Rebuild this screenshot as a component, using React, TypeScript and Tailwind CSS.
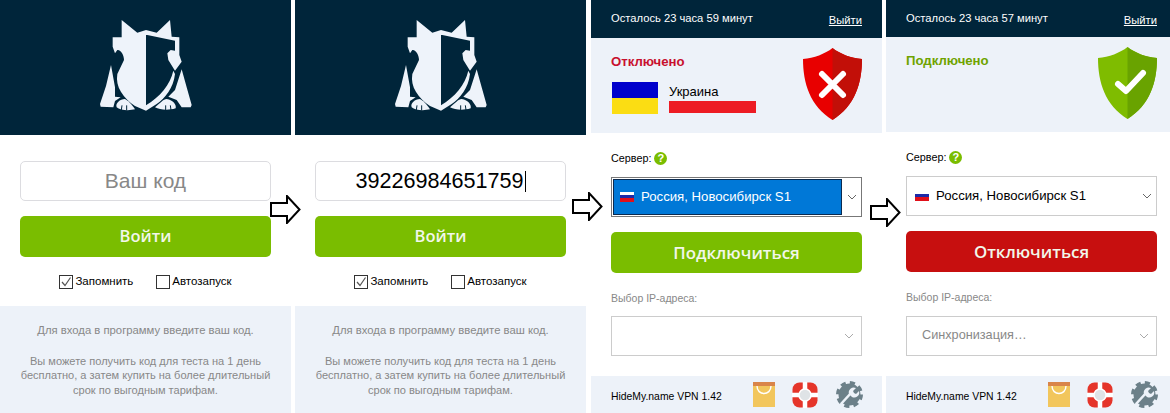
const SANS = 'font-["Liberation_Sans",Arial,sans-serif]';

function Logo() {
  return (
    <svg width="92" height="92" viewBox="300 60 276 276" className="block">
      <g fill="#eef3fa">
        <path d="M365 60 L412 98 L438 90 L470 98 L510 60 L515 110 L538 112 L538 165 L545 185 L525 212 L505 180 L502 160 L512 150 L525 152 L525 122 L442 105 L438 105 L438 332 L405 318 C370 295 345 260 352 222 L372 180 C372 165 362 148 352 150 L345 160 L338 140 L338 112 L365 112 Z" />
        <path d="M438 332 L438 316 C480 290 510 255 520 212 L525 222 C520 265 495 295 470 312 Z" />
        <path d="M333 195 L345 262 L345 290 L362 292 L345 303 L340 322 L302 320 L300 312 L318 258 Z" />
        <path d="M545 208 L560 262 L575 315 L572 322 L545 322 L530 300 L505 290 L525 270 Z" />
        <path d="M350 322 C345 310 360 297 375 297 C390 305 400 320 405 328 C390 332 360 332 350 322 Z" />
        <path d="M465 322 C480 310 490 297 500 297 C520 300 530 315 527 325 C505 332 480 330 465 322 Z" />
      </g>
      <path d="M364 330 L366 316 M380 331 L380 316 M497 331 L497 316 M513 330 L511 316" stroke="#00253a" strokeWidth="3" />
    </svg>
  );
}

function LoginPanel({ code }: { code?: string }) {
  return (
    <div className={`flex h-[413px] w-[291px] shrink-0 flex-col ${SANS}`}>
      <div className="flex h-[135px] items-center justify-center bg-[#00253a] pb-[3px]">
        <Logo />
      </div>
      <div className="flex h-[171px] flex-col bg-white px-5 pt-[26px]">
        <div
          className={`flex h-10 items-center justify-center rounded-[5px] border border-[#dcdce0] ${
            code ? 'text-[21.6px] text-black' : 'text-[21px] text-[#888]'
          }`}
        >
          {code ? (
            <>
              {code}
              <span className="ml-[1px] h-[21px] w-[1px] bg-black" />
            </>
          ) : (
            'Ваш код'
          )}
        </div>
        <button className='mt-[15px] h-[41px] rounded-[5px] bg-[#7abd00] font-["Open_Sans",sans-serif] text-[16.5px] font-semibold text-[#f2f7ea]'>
          Войти
        </button>
        <div className="mt-[16px] flex items-center justify-center text-[11.5px] text-black">
          <span className="flex h-[14px] w-[14px] items-center justify-center border border-[#333]">
            <svg width="12" height="12" viewBox="0 0 12 12">
              <path d="M2 6 L5 9.5 L10.5 1.5" fill="none" stroke="#555" strokeWidth="1.2" />
            </svg>
          </span>
          <span className="ml-[2px]">Запомнить</span>
          <span className="ml-[23px] h-[14px] w-[14px] border border-[#333]" />
          <span className="ml-[2px]">Автозапуск</span>
        </div>
      </div>
      <div className="flex-1 bg-[#edf2f9] pt-[17px] text-center text-[11.05px] leading-[14.5px] text-[#888]">
        <p className="text-[11.3px]">Для входа в программу введите ваш код.</p>
        <p className="mt-[16px]">
          Вы можете получить код для теста на 1 день
          <br />
          бесплатно, а затем купить на более длительный
          <br />
          срок по выгодным тарифам.
        </p>
      </div>
    </div>
  );
}

function ShieldRed() {
  return (
    <svg width="59" height="72" viewBox="0 0 59 72" className="block">
      <path fill="#e80000" d="M29.5 0 C37 6 48 10 59 11 C59 35 52 58 29.5 72 C7 58 0 35 0 11 C11 10 22 6 29.5 0 Z" />
      <path fill="#c20f08" d="M29.5 0 C37 6 48 10 59 11 C59 35 52 58 29.5 72 Z" />
      <path d="M19 26 L40 47 M40 26 L19 47" stroke="#fff" strokeWidth="6" strokeLinecap="round" />
    </svg>
  );
}

function ShieldGreen() {
  return (
    <svg width="59" height="72" viewBox="0 0 59 72" className="block">
      <path fill="#7fbc00" d="M29.5 0 C37 6 48 10 59 11 C59 35 52 58 29.5 72 C7 58 0 35 0 11 C11 10 22 6 29.5 0 Z" />
      <path fill="#69a300" d="M29.5 0 C37 6 48 10 59 11 C59 35 52 58 29.5 72 Z" />
      <path d="M20 37 L28 44 L45 26" fill="none" stroke="#fff" strokeWidth="6" strokeLinecap="round" strokeLinejoin="round" />
    </svg>
  );
}

function RuFlag() {
  return (
    <span className="flex h-[10px] w-[14px] flex-col">
      <span className="h-[3px] bg-white" />
      <span className="h-[3px] bg-[#1c2aa8]" />
      <span className="h-[4px] bg-[#e0101a]" />
    </span>
  );
}

function Chevron({ color }: { color: string }) {
  return (
    <svg width="10" height="6" viewBox="0 0 10 6" className="block">
      <path d="M1 1 L5 5 L9 1" fill="none" stroke={color} strokeWidth="1" />
    </svg>
  );
}

function BagIcon() {
  return (
    <svg width="22" height="25" viewBox="0 0 22 25" className="block">
      <rect width="22" height="25" fill="#f2c65c" />
      <rect width="22" height="4" fill="#d9854a" />
      <path d="M4 4 C4 14 18 14 18 4" fill="none" stroke="#fff" strokeWidth="1.4" />
    </svg>
  );
}

function BuoyIcon() {
  return (
    <svg width="26" height="26" viewBox="0 0 26 26" className="block">
      <rect x="0.5" y="0.5" width="25" height="25" rx="7" fill="#e5352a" />
      <rect x="10.75" y="0" width="4.5" height="26" fill="#fff" />
      <rect x="0" y="10.75" width="26" height="4.5" fill="#fff" />
      <circle cx="13" cy="13" r="6" fill="#dfe3e6" stroke="#fff" strokeWidth="1.5" />
    </svg>
  );
}

function GearIcon() {
  return (
    <svg width="27" height="27" viewBox="0 0 27 27" className="block">
      <circle cx="13.5" cy="13.5" r="8" fill="none" stroke="#6c8089" strokeWidth="6" />
      <circle cx="13.5" cy="13.5" r="11.5" fill="none" stroke="#6c8089" strokeWidth="4" strokeDasharray="5 4.03" />
      <circle cx="13.5" cy="13.5" r="6" fill="#6c8089" />
      <path d="M5 23 L15 12" stroke="#edf2f9" strokeWidth="2.6" />
      <path d="M13 13 A5 5 0 0 1 20 7 L17 10 L18 12 L20 13 L23 10 A5 5 0 0 1 16 16 Z" fill="#edf2f9" />
    </svg>
  );
}

function VpnPanel({ connected, time }: { connected: boolean; time: string }) {
  return (
    <div className={`flex h-[413px] w-[291px] shrink-0 flex-col ${SANS}`}>
      <div
        className={`flex items-start justify-between bg-[#00253a] px-5 pt-[10px] text-[11.2px] text-white ${
          connected ? 'h-[37px]' : 'h-[38px]'
        }`}
      >
        <span>{time}</span>
        <span className="mt-[2px] underline">Выйти</span>
      </div>
      <div className="flex h-[95px] items-start justify-between bg-[#edf2f9] px-5 pt-[10px]">
        <div className="pt-[5px]">
          {connected ? (
            <div className="text-[13.2px] font-bold leading-[18px] text-[#6fa300]">Подключено</div>
          ) : (
            <>
              <div className="text-[13.2px] font-bold leading-[18px] text-[#c8102e]">Отключено</div>
              <div className="mt-[11px] ml-[1px] flex">
                <div className="flex h-8 w-[46px] flex-col">
                  <span className="h-4 bg-[#0000cc]" />
                  <span className="h-4 bg-[#fbdd13]" />
                </div>
                <div className="ml-[11px] flex flex-col">
                  <span className="text-[13px] leading-[19px] text-black">Украина</span>
                  <span className="h-3 w-[87px] bg-[#ed1c24]" />
                </div>
              </div>
            </>
          )}
        </div>
        {connected ? <ShieldGreen /> : <ShieldRed />}
      </div>
      <div className="flex flex-1 flex-col bg-white px-5 pt-[17px]">
        <div className="flex h-4 items-center text-[10.8px] text-black">
          Сервер:
          <span className="ml-[3px] flex h-[13px] w-[13px] items-center justify-center rounded-full bg-[#7abd00] text-[11px] font-bold text-white">
            ?
          </span>
        </div>
        <div
          className={`mt-[11px] flex h-10 items-center border text-[13.2px] ${
            connected ? 'border-[#ccc] text-black' : 'border-[#777] text-white'
          }`}
        >
          <div
            className={`flex h-full flex-1 items-center pl-[8px] ${
              connected ? '' : 'border border-[#0a2a50] bg-[#0078d7] ml-[1px] my-[1px] !h-[36px] !pl-[6px]'
            }`}
          >
            <RuFlag />
            <span className="ml-[7px]">Россия, Новосибирск S1</span>
          </div>
          <div className="flex w-[19px] justify-center">
            <Chevron color="#666" />
          </div>
        </div>
        <button
          className={`mt-[15px] h-[41px] shrink-0 rounded-[5px] font-["Open_Sans",sans-serif] text-[16.9px] font-semibold text-[#f2f7ea] ${
            connected ? 'bg-[#c70f0f]' : 'bg-[#7abd00]'
          }`}
        >
          {connected ? 'Отключиться' : 'Подключиться'}
        </button>
        <div className="mt-[17px] h-4 text-[10.5px] leading-4 text-[#888]">Выбор IP-адреса:</div>
        <div
          className={`flex h-10 items-center justify-between border border-[#ccc] pl-[15px] pr-[3px] text-[12.7px] text-[#888] ${
            connected ? 'mt-[11px]' : 'mt-[10px]'
          }`}
        >
          <span>{connected ? 'Синхронизация…' : ''}</span>
          <span className="flex w-[19px] justify-center">
            <Chevron color="#aaa" />
          </span>
        </div>
      </div>
      <div className="flex h-[37px] items-center justify-between bg-[#edf2f9] pl-5 pr-[19px] text-[10.4px] text-black">
        <span className="mt-[4px]">HideMy.name VPN 1.42</span>
        <div className="flex items-center gap-[18px]">
          <BagIcon />
          <span className="-ml-[1px]">
            <BuoyIcon />
          </span>
          <GearIcon />
        </div>
      </div>
    </div>
  );
}

function Arrow({ className }: { className: string }) {
  return (
    <svg width="31" height="29" viewBox="0 0 31 29" className={`absolute ${className}`}>
      <path d="M1 8 L17 8 L17 1 L29.5 14.5 L17 28 L17 21 L1 21 Z" fill="#fff" stroke="#000" strokeWidth="2" />
    </svg>
  );
}

export default function App() {
  return (
    <div className="relative flex h-[413px] w-[1170px] overflow-hidden bg-white">
      <LoginPanel />
      <div className="w-1 shrink-0" />
      <LoginPanel code="39226984651759" />
      <div className="w-[5px] shrink-0" />
      <VpnPanel connected={false} time="Осталось 23 часа 59 минут" />
      <div className="w-1 shrink-0" />
      <VpnPanel connected time="Осталось 23 часа 57 минут" />
      <Arrow className="left-[270px] top-[195px]" />
      <Arrow className="left-[572px] top-[192px]" />
      <Arrow className="left-[870px] top-[198px]" />
    </div>
  );
}
